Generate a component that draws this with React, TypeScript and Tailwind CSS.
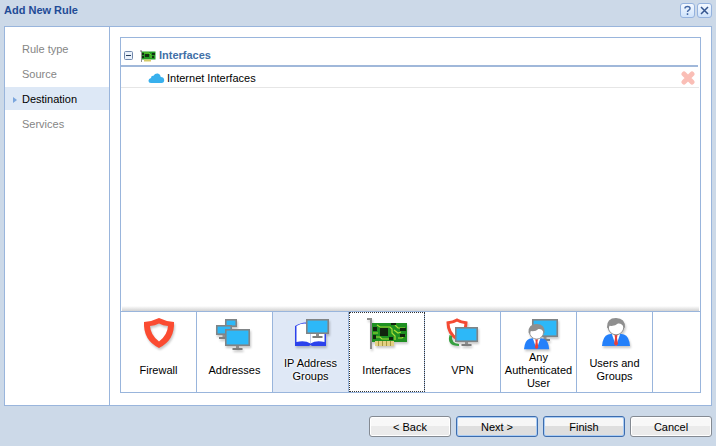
import { useState } from "react";
import type { ReactNode } from "react";

function Monitor({ x, y, w, h, stand = true }: { x: number; y: number; w: number; h: number; stand?: boolean }) {
  const c = x + w / 2;
  return (
    <g>
      <rect x={x} y={y} width={w} height={h} fill="#808486" />
      <rect x={x + 1.6} y={y + 1.6} width={w - 3.2} height={h - 3.2} fill="#2db8f8" />
      {stand && (
        <>
          <rect x={c - 1.5} y={y + h} width="3" height="2" fill="#8d8d8d" />
          <rect x={c - 5} y={y + h + 2} width="10" height="2" fill="#7d7d7d" />
        </>
      )}
    </g>
  );
}

function Person() {
  return (
    <g>
      <path d="M0 28 Q1 18 6 16.500 L11 15.500 H17 L22 16.500 Q27 18 28 28 Z" fill="#2480fa" />
      <path d="M9.500 15 L14 28 L18.500 15 Z" fill="#fff" />
      <path d="M12.500 17 H15.500 L15 20 L16 26 L14 28 L12 26 L13 20 Z" fill="#e8403a" />
      <circle cx="14" cy="9" r="7.800" fill="#fff" stroke="#8f8f8f" strokeWidth="1" />
      <path d="M5 9.500 Q4.500 0 14 0 Q23.500 0 23 10 L21.500 9 Q20 5 16 5.500 Q13 8.500 7.500 7.800 L6.500 11 Z" fill="#8f8f8f" />
    </g>
  );
}

function Glyph({ children }: { children: ReactNode }) {
  return (
    <svg viewBox="0 0 75 38" aria-hidden="true" className="h-[38px] w-[75px] shrink-0 drop-shadow-[1px_2px_1px_rgba(0,0,0,0.22)]">
      {children}
    </svg>
  );
}

const shieldPath =
  "M0 4 Q8 3.500 15 0 Q22 3.500 30 4 Q31 22 15 30 Q-1 22 0 4 Z M6 8 Q6.500 17 15 23.500 Q23.500 17 24 8 Q19 7.500 15 5.500 Q11 7.500 6 8 Z";

function BoardIcon() {
  return (
    <>
      <path d="M18 6 H23 V37 H21 V8 H18 Z" fill="#8b8b8b" />
      <rect x="23" y="11" width="35" height="19" fill="#1f9022" />
      <rect x="26" y="29" width="19" height="5" fill="#e3d083" />
      <path d="M29.500 29 V34 M33.500 29 V34 M37.500 29 V34 M41.500 29 V34" stroke="#a79840" strokeWidth="1" />
      <path
        d="M24 21 H29 M26 25 H31 L33 27 H40 M28 13 L31 15 H41 L43 17 V21 L46 24 V28 M46 13 L49 16 H56 M45 18 L49 21 L52 20 M49 26 H53 L56 23"
        fill="none"
        stroke="#a8dc35"
        strokeWidth="1.200"
      />
      <path d="M31 16 H39 V24 H31 Z M24 15 H28 V19 H24 Z M24 23 H27 V27 H24 Z M42 11 H47 V13 H42 Z M51 16 H57 V19 H51 Z M51 22 H56 V25 H51 Z M40 25 H44 V28 H40 Z" fill="#12240e" />
    </>
  );
}

const objects: { label: string; icon?: ReactNode }[] = [
  {
    label: "Firewall",
    icon: <path d={shieldPath} transform="translate(23 6)" fill="#fb4b31" fillRule="evenodd" />,
  },
  {
    label: "Addresses",
    icon: (
      <>
        <Monitor x={28} y={7} w={12} h={8} stand={false} />
        <Monitor x={19} y={13} w={16} h={10} />
        <Monitor x={28} y={17} w={25} h={17} />
      </>
    ),
  },
  {
    label: "IP Address Groups",
    icon: (
      <>
        <path d="M22 14 Q32 8 37.500 12 Q44 9 53 13 V34 H39 L37.500 33 L36 34 H22 Z" fill="#2c42ec" />
        <path d="M23.500 14 Q32 9.500 37.500 13.500 Q44 10 51.500 14 V30 Q43 28 37.500 31.500 Q32 28 23.500 30 Z" fill="#fff" />
        <path d="M37.500 14 V31" stroke="#c3caea" />
        <Monitor x={33} y={7} w={23} h={15} />
      </>
    ),
  },
  { label: "Interfaces", icon: <BoardIcon /> },
  {
    label: "VPN",
    icon: (
      <>
        <path d="M23 10.800 Q28 10.500 32 8 Q36 10.500 41 10.800 Q41 21 32 27 Q23 21 23 10.800 Z" fill="#fff" stroke="#f44a33" strokeWidth="3" />
        <path d="M24.500 23 Q21.500 34 34 34 V32 Q26 31 27 24 Z" fill="#36a040" />
        <Monitor x={30} y={15} w={23} h={15} />
      </>
    ),
  },
  {
    label: "Any Authenticated User",
    icon: (
      <>
        <Monitor x={31} y={7} w={26} h={18} />
        <g transform="translate(23 12) scale(0.900)">
          <Person />
        </g>
      </>
    ),
  },
  {
    label: "Users and Groups",
    icon: (
      <g transform="translate(25 6)">
        <Person />
      </g>
    ),
  },
];

const steps = ["Rule type", "Source", "Destination", "Services"];

function TitleButton({ label, children }: { label: string; children: ReactNode }) {
  return (
    <button
      type="button"
      aria-label={label}
      className="flex size-[15px] items-center justify-center rounded-[3px] border border-[#94b2de] bg-linear-to-b from-[#f4f9ff] to-[#cfe3fb]"
    >
      <svg viewBox="0 0 11 11" className="size-[11px]" fill="none" stroke="#4468a4" strokeWidth="1.500">
        {children}
      </svg>
    </button>
  );
}

function WizardButton({ label, primary = false }: { label: string; primary?: boolean }) {
  return (
    <button
      type="button"
      className={
        primary
          ? "h-[21px] w-[82px] rounded-[3px] border border-[#3c6cae] bg-linear-to-b from-[#f6f6f6] from-50% to-[#dedede] to-50% pt-[2px] inset-ring inset-ring-[#a9ccf4]"
          : "h-[21px] w-[82px] rounded-[3px] border border-[#848a92] bg-linear-to-b from-[#f8f8f8] from-50% to-[#ebebeb] to-50% pt-[2px] inset-ring inset-ring-white"
      }
    >
      {label}
    </button>
  );
}

export default function App() {
  const [step, setStep] = useState("Destination");
  return (
    <div className="flex min-h-screen flex-col bg-[#ccd9e8] px-1 font-['Liberation_Sans',Arial,sans-serif] text-[11px] leading-[13px] text-black">
      <header className="flex h-[26px] items-center justify-between pb-[5px]">
        <h1 className="font-bold text-[#1f4b96]">Add New Rule</h1>
        <div className="flex gap-[2px]">
          <TitleButton label="Help">
            <path d="M3 3.500 Q3 1.500 5.500 1.500 Q8 1.500 8 3.500 Q8 4.800 6.500 5.300 Q5.500 5.800 5.500 7" />
            <path d="M5.500 8.200 V10" />
          </TitleButton>
          <TitleButton label="Close">
            <path d="M2 2 L9 9 M9 2 L2 9" stroke="#34558f" />
          </TitleButton>
        </div>
      </header>

      <div className="flex flex-1 border border-[#99b5dc] bg-white">
        <nav className="flex w-[105px] shrink-0 flex-col gap-[2px] border-r border-[#99b5dc] pt-[10px]">
          {steps.map((s) => (
            <button
              key={s}
              type="button"
              onClick={() => setStep(s)}
              className={
                s === step
                  ? "flex h-[23px] items-center bg-[#dde8f6] pt-[2px] text-left text-black"
                  : "flex h-[23px] items-center pt-[2px] text-left text-[#858585]"
              }
            >
              <span className="flex w-[17px] shrink-0 justify-center pl-[2px]">
                {s === step && (
                  <svg viewBox="0 0 4 6" className="h-[6px] w-1" aria-hidden="true">
                    <path d="M0 0 L4 3 L0 6 Z" fill="#7ba6dd" />
                  </svg>
                )}
              </span>
              {s}
            </button>
          ))}
        </nav>

        <main className="flex min-w-0 flex-1 flex-col px-[10px] pt-[10px] pb-3">
          <section className="flex min-w-0 flex-1 flex-col border-x border-t border-[#99b5dc]">
            <div className="mr-[2px] flex h-[29px] items-center border-b-2 border-[#a0b8da] pt-[8px] pl-[3px]">
              <button type="button" aria-label="Collapse Interfaces">
                <svg viewBox="0 0 9 9" className="size-[9px]">
                  <rect x="0.500" y="0.500" width="8" height="8" rx="1" fill="#e9f1fb" stroke="#7188ac" />
                  <path d="M2 4.500 H7" stroke="#273d5c" />
                </svg>
              </button>
              <svg viewBox="0 0 16 12" className="ml-[7px] h-3 w-4" aria-hidden="true">
                <path d="M0 0.500 H2 V12 H1.200 V1.500 H0 Z" fill="#777" />
                <rect x="2" y="1.500" width="13.500" height="8" fill="#239b25" />
                <path d="M4 9.500 H11 V11.500 H4 Z" fill="#d4cb67" />
                <path d="M2 3 H4 V5 H2 Z M5 4 H9 V7 H5 Z M12 3 H15 V5 H12 Z M2 6 H4 V8 H2 Z M12 6 H14 V8 H12 Z" fill="#143112" />
                <path d="M4 3 H9 L11 5 V8" fill="none" stroke="#80d330" strokeWidth="0.800" />
              </svg>
              <h2 className="ml-[3px] font-bold text-[#4270a7]">Interfaces</h2>
            </div>
            <div className="mr-[1px] flex h-[21px] items-center border-b border-[#e6e6e6] pt-[2px] pl-[27px]">
              <svg viewBox="0 0 17 12" className="h-3 w-[17px]" aria-hidden="true">
                <path d="M3 11 Q0.500 11 0.500 8.500 Q0.500 6.500 3 6 Q3 3.500 5.500 3.800 Q7 1 10 1.500 Q12.500 2 12.800 5 Q16 5 16.200 8 Q16.300 11 13.500 11 Z" fill="#38b0ed" />
              </svg>
              <span className="ml-[2px]">Internet Interfaces</span>
              <button type="button" aria-label="Remove Internet Interfaces" className="mr-[4px] ml-auto">
                <svg viewBox="0 0 14 14" className="size-[14px]">
                  <path d="M3 3 L11 11 M11 3 L3 11" stroke="#fabeb6" strokeWidth="5" strokeLinecap="round" />
                </svg>
              </button>
            </div>
            <div className="mx-[1px] mt-auto h-[5px] bg-linear-to-b from-white to-[#d2d2d2]" />
            <div className="flex border-y border-[#99b5dc]">
              {objects.map((o) => (
                <button
                  key={o.label}
                  type="button"
                  className={
                    o.label === "IP Address Groups"
                      ? "flex w-[76px] flex-col items-center border-r border-[#99b5dc] bg-[#dfe8f6]"
                      : o.label === "Interfaces"
                        ? "flex w-[76px] flex-col items-center border-r border-[#99b5dc] outline outline-dotted -outline-offset-1 outline-[#333]"
                        : "flex w-[76px] flex-col items-center border-r border-[#99b5dc]"
                  }
                >
                  <Glyph>{o.icon}</Glyph>
                  <span
                    className={
                      o.label === "IP Address Groups"
                        ? "flex h-[42px] items-center px-[3px] pb-[2px] text-center [text-shadow:0_0_3px_white,0_0_3px_white,0_0_2px_white]"
                        : "flex h-[42px] items-center px-[3px] pb-[2px] text-center"
                    }
                  >
                    {o.label}
                  </span>
                </button>
              ))}
            </div>
          </section>
        </main>
      </div>

      <footer className="flex h-10 items-center justify-end gap-[5px] pt-px">
        <WizardButton label="&lt; Back" />
        <WizardButton label="Next &gt;" primary />
        <WizardButton label="Finish" primary />
        <WizardButton label="Cancel" />
      </footer>
    </div>
  );
}
